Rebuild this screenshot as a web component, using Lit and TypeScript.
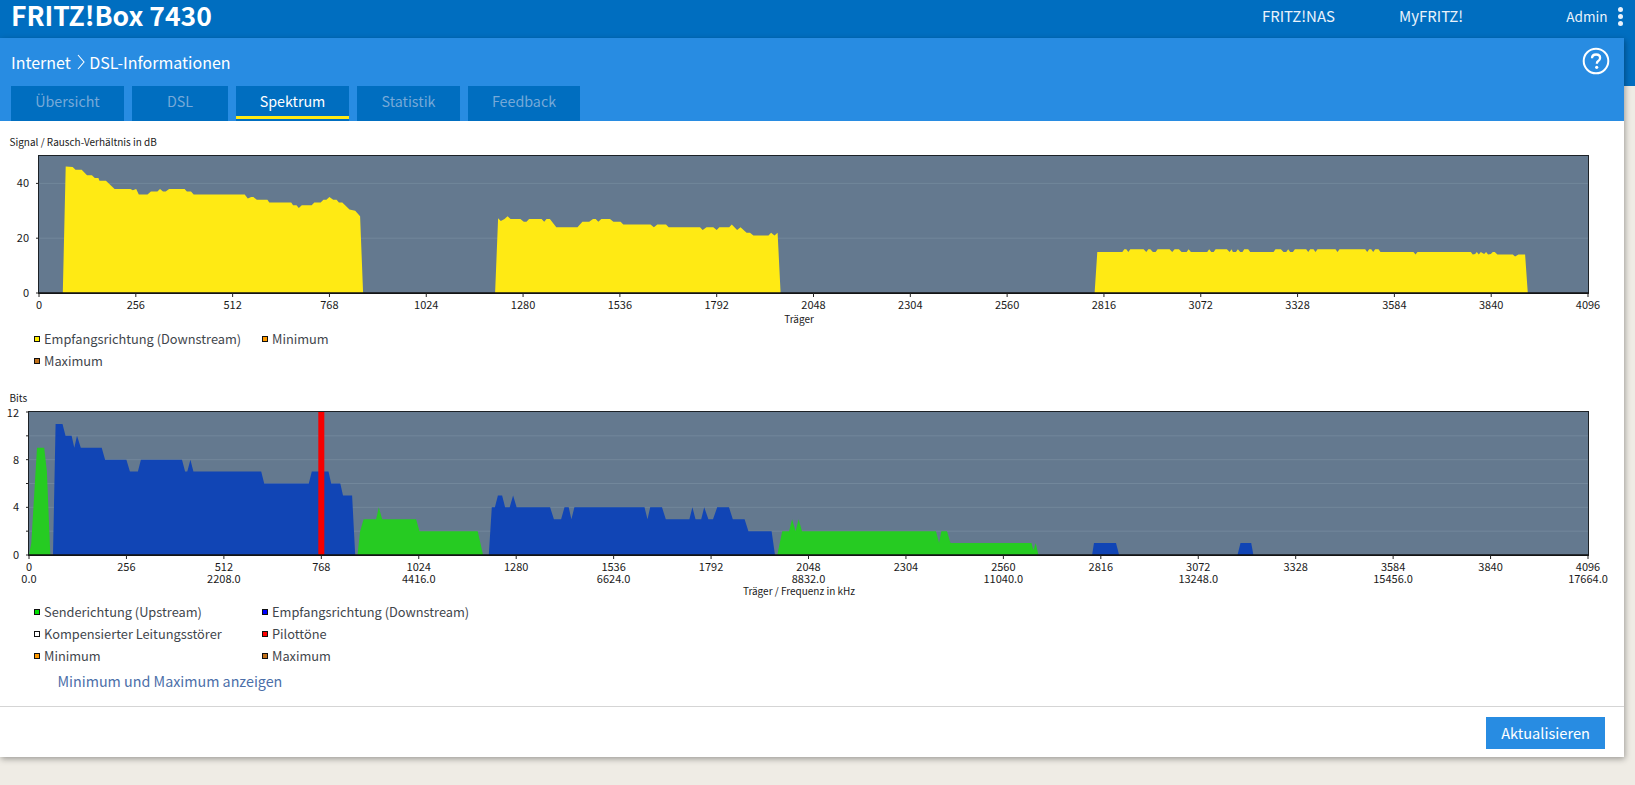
import { LitElement, html, css, svg } from "lit";
import { customElement, property } from "lit/decorators.js";

type Pt = [number, number];
interface Area { color: string; pts: Pt[] }
interface ChartCfg {
  left: number; right: number; top: number; bottom: number; height: number; maxY: number;
  yLabels: number[]; grid: number[]; minorTicks: number[];
  freq: boolean; xTitle: string; xTitleY: number; areas: Area[]; marker?: number;
}

const px3 = (p: Pt[]): Pt[] => p.map(([x, v]) => [2816 + (x - 131) / 1.135, v]);

const YELLOW = "#ffea14", BLUE = "#1145b5", GREEN = "#26cb22";

const snr1: Pt[] = [[63,0],[70.5,46.2],[89,46],[96.5,45],[113,45],[127,43],[140,43],[147.5,42],[157,42],[160,41],[177,41],[200,38],[242,38],[248,37.5],[257,38],[264,36],[287,36],[296,37],[313,37],[320,38],[328,37],[335,37],[344,38],[385,38],[391,37],[402,37],[409,36],[544,36],[552,34.5],[561,35],[567,35],[576,34],[604,34],[609,33],[667,33],[672,32],[681,32],[687,31],[695,32],[721,32],[728,33],[745,33],[752,34],[760,34],[768,35],[778,34],[787,34],[793,33],[802,33],[821,30.5],[836,30],[849,28],[857,0]];
const snr2: Pt[] = [[1206,0],[1214,27.3],[1221,26.3],[1231,27],[1239,28],[1247,27],[1273,27],[1282,26],[1289,26],[1296,27],[1329,27],[1336,26],[1342,27],[1351,27],[1368,24],[1424,24],[1437,26],[1455,26],[1465,27],[1472,27],[1479,26],[1487,27],[1510,27],[1519,26],[1538,26],[1545,25],[1617,25],[1626,24],[1635,25],[1658,25],[1665,24],[1748,24],[1755,23],[1765,24],[1783,24],[1792,23],[1799,24],[1825,24],[1832,25],[1846,23],[1855,24],[1871,22],[1880,22],[1889,21],[1929,21],[1936,22],[1945,21],[1953,22],[1961,0]];
const snr3: Pt[] = px3([[103,0],[111,15],[186,15],[192,16],[198,16],[204,15],[210,16],[250,16],[258,15],[264,16],[270,16],[278,15],[286,15],[292,16],[328,16],[336,15],[343,16],[356,16],[364,15],[379,15],[385,16],[392,15],[441,15],[447,16],[453,15],[460,15],[466,16],[500,16],[508,15],[514,16],[518,15],[527,15],[533,16],[540,15],[547,15],[552,16],[564,16],[570,15],[640,15],[646,16],[662,16],[670,15],[678,15],[684,16],[690,15],[698,15],[704,16],[738,16],[744,15],[750,16],[760,16],[766,15],[772,16],[790,16],[796,16],[826,16],[832,15],[838,16],[915,16],[921,15],[927,16],[933,16],[939,15],[945,16],[955,16],[961,15],[1060,15],[1066,14],[1072,15],[1232,15],[1238,14],[1245,14.2],[1250,15],[1256,14],[1262,15],[1272,14.2],[1278,15],[1284,14],[1292,14.2],[1298,15],[1304,15],[1312,14],[1358,14],[1365,13.3],[1375,14],[1395,14],[1403,0]]);

const chart1: ChartCfg = {
  left: 39, right: 1588, top: 7, bottom: 144, height: 179, maxY: 50,
  yLabels: [0, 20, 40], grid: [20, 40], minorTicks: [], freq: false,
  xTitle: "Träger", xTitleY: 174,
  areas: [{ color: YELLOW, pts: snr1 }, { color: YELLOW, pts: snr2 }, { color: YELLOW, pts: snr3 }],
};

const chart2: ChartCfg = {
  left: 29, right: 1588, top: 7, bottom: 150, height: 196, maxY: 12,
  yLabels: [0, 4, 8, 12], grid: [2, 4, 6, 8, 10], minorTicks: [2, 6, 10], freq: true,
  xTitle: "Träger / Frequenz in kHz", xTitleY: 190, marker: 768,
  areas: [
    { color: GREEN, pts: [[0,0],[6,1],[21,9],[40,9],[47,7],[56,0]] },
    { color: BLUE, pts: [[63,0],[70,11],[88,11],[96,10],[112,10],[119,9],[126,10],[136,9],[191,9],[200,8],[256,8],[265,7],[286,7],[294,8],[402,8],[410,7],[416,7],[424,8],[432,7],[610,7],[618,6],[735,6],[743,7],[787,7],[794,6],[818,6],[825,5],[849,5],[857,0]] },
    { color: GREEN, pts: [[863,0],[870,2],[879,3],[912,3],[919,4],[928,3],[1017,3],[1026,2],[1179,2],[1193,0]] },
    { color: BLUE, pts: [[1208,0],[1216,4],[1224,4],[1232,5],[1243,5],[1251,4],[1263,4],[1272,5],[1281,4],[1369,4],[1379,3],[1398,3],[1407,4],[1418,4],[1425,3],[1433,4],[1617,4],[1625,3],[1632,4],[1663,4],[1673,3],[1735,3],[1743,4],[1751,3],[1766,3],[1774,4],[1785,3],[1797,3],[1808,4],[1839,4],[1849,3],[1880,3],[1890,2],[1951,2],[1960,0]] },
    { color: GREEN, pts: [[1966,0],[1979,2],[1997,2],[2005,3],[2014,2],[2022,3],[2031,2],[2383,2],[2391,1],[2397,2],[2412,2],[2421,1],[2634,1],[2639,0.4],[2645,1],[2652,0]] },
    { color: BLUE, pts: [[2793,0],[2798,1],[2856,1],[2864,0]] },
    { color: BLUE, pts: [[3175,0],[3183,1],[3211,1],[3217,0]] },
  ],
};

@customElement("spectrum-chart")
class SpectrumChart extends LitElement {
  @property({ attribute: false }) cfg!: ChartCfg;
  static styles = css`
    :host { display: block; }
    svg { display: block; }
    .plot { fill: #64798f; }
    .grid { stroke: #72879b; stroke-width: 1; }
    .frame { fill: none; stroke: #1c2126; stroke-width: 1; }
    .axis { stroke: #111; stroke-width: 1.5; }
    .tick { stroke: #222; stroke-width: 1; }
    .lbl { font: 11px "Noto Sans CJK SC", "Liberation Sans", sans-serif; fill: #1a1a1a; }
    .ttl { font: 10px "Noto Sans CJK SC", "Liberation Sans", sans-serif; fill: #1a1a1a; }
    .mid { text-anchor: middle; }
    .end { text-anchor: end; }
  `;
  render() {
    const c = this.cfg;
    const X = (v: number) => c.left + (v / 4096) * (c.right - c.left);
    const Y = (v: number) => c.bottom - (v / c.maxY) * (c.bottom - c.top);
    const xs: number[] = [];
    for (let v = 0; v <= 4096; v += 256) xs.push(v);
    const bottomLabelY = c.bottom + 16;
    return html`<svg width="1624" height=${c.height} viewBox="0 0 1624 ${c.height}">
      <rect class="plot" x=${c.left} y=${c.top} width=${c.right - c.left} height=${c.bottom - c.top}></rect>
      ${c.grid.map((g) => svg`<line class="grid" x1=${c.left} x2=${c.right} y1=${Y(g)} y2=${Y(g)}></line>`)}
      ${c.areas.map((a) => svg`<polygon fill=${a.color} points=${a.pts.map(([x, v]) => `${X(x).toFixed(1)},${Y(v).toFixed(1)}`).join(" ")}></polygon>`)}
      ${c.marker !== undefined
        ? svg`<rect fill="#f60000" x=${X(c.marker) - 3} y=${c.top} width="6" height=${c.bottom - c.top}></rect>`
        : ""}
      <rect class="frame" x=${c.left - 0.5} y=${c.top - 0.5} width=${c.right - c.left + 1} height=${c.bottom - c.top + 1}></rect>
      <line class="axis" x1=${c.left - 0.5} x2=${c.right + 0.5} y1=${c.bottom} y2=${c.bottom}></line>
      ${xs.map((v) => svg`
        <line class="tick" x1=${X(v)} x2=${X(v)} y1=${c.bottom} y2=${c.bottom + 4}></line>
        <text class="lbl mid" x=${X(v)} y=${bottomLabelY}>${v}</text>
        ${c.freq && v % 512 === 0
          ? svg`<text class="lbl mid" x=${X(v)} y=${bottomLabelY + 12}>${(v * 4.3125).toFixed(1)}</text>`
          : ""}
      `)}
      ${c.yLabels.map((v) => svg`
        <line class="tick" x1=${c.left - 3} x2=${c.left} y1=${Y(v)} y2=${Y(v)}></line>
        <text class="lbl end" x=${c.left - 10} y=${Y(v) + (v === c.maxY ? 5 : 4)}>${v}</text>
      `)}
      ${c.minorTicks.map((v) => svg`<line class="tick" x1=${c.left - 3} x2=${c.left} y1=${Y(v)} y2=${Y(v)}></line>`)}
      <text class="ttl mid" x="799" y=${c.xTitleY}>${c.xTitle}</text>
    </svg>`;
  }
}

const legend1 = [
  ["Empfangsrichtung (Downstream)", "#ffee00"],
  ["Minimum", "#ff9a00"],
  ["Maximum", "#c0701a"],
];
const legend2 = [
  ["Senderichtung (Upstream)", "#00e000"],
  ["Empfangsrichtung (Downstream)", "#0000ff"],
  ["Kompensierter Leitungsstörer", "#ffffff"],
  ["Pilottöne", "#ff0000"],
  ["Minimum", "#ff9a00"],
  ["Maximum", "#c0701a"],
];

@customElement("app-root")
class AppRoot extends LitElement {
  static styles = css`
    :host {
      display: block;
      height: 785px;
      overflow: hidden;
      background: linear-gradient(#006ec0 86px, #efece5 86px);
      font-family: "Noto Sans CJK SC", "Source Sans Pro", "Liberation Sans", sans-serif;
      color: #3f464c;
    }
    .top {
      height: 38px;
      display: flex;
      align-items: center;
      padding: 0 11px;
      color: #fff;
    }
    .brand { font-size: 26.5px; font-weight: 700; line-height: 32px; flex: 1; margin-top: -8px; }
    .topnav { font-size: 15px; line-height: 20px; color: #e9f2fb; margin-top: -6px; }
    .nav1 { margin-right: 64px; }
    .nav2 { margin-right: 103px; }
    .nav3 { margin-right: 10px; font-size: 13.6px; }
    .dots { display: flex; flex-direction: column; gap: 2px; margin-top: -6px; margin-right: 1.5px; }
    .dots i { width: 5px; height: 5px; border-radius: 50%; background: #e9f2fb; }
    .panel {
      width: 1624px;
      height: 719px;
      display: flex;
      flex-direction: column;
      background: #fff;
      box-shadow: 1px 2px 6px rgba(0, 0, 0, 0.35);
    }
    .head { background: #288ce2; height: 83px; display: flex; flex-direction: column; padding: 0 11px; box-sizing: border-box; flex: none; }
    .crumbs { height: 48px; display: flex; align-items: center; color: #fff; font-size: 16px; }
    .crumbs svg.chev { margin: 0 4.5px 0 6px; }
    .help { margin-left: auto; margin-right: 3px; margin-top: -2px; }
    .tabs { display: flex; gap: 8px; height: 35px; }
    .tab {
      background: #006ec0;
      color: #76a9d8;
      font-size: 14.3px;
      line-height: 30px;
      text-align: center;
      box-sizing: border-box;
      padding-bottom: 5px;
    }
    .tab.on { color: #fff; position: relative; }
    .tab.on::after { content: ""; position: absolute; left: 0; right: 0; bottom: 2px; height: 3px; background: #ffea14; }
    .body { flex: 1; display: flex; flex-direction: column; min-height: 0; }
    .title { font-size: 10px; color: #1a1a1a; line-height: 14px; padding-left: 9.5px; }
    .t1 { margin-top: 14px; }
    .t2 { margin-top: 19px; }
    .legend {
      display: grid;
      grid-template-columns: 228px auto;
      justify-content: start;
      grid-auto-rows: 22px;
      padding-left: 34px;
      font-size: 12.8px;
      color: #3f464c;
    }
    .item { display: flex; align-items: center; gap: 4px; white-space: nowrap; line-height: 22px; }
    .sw { width: 4px; height: 4px; border: 1.5px solid #111; box-sizing: content-box; flex: none; }
    .link { color: #4c6fa9; font-size: 14.3px; line-height: 22px; padding: 3px 0 0 57.5px; }
    .foot {
      margin-top: auto;
      border-top: 1px solid #d5d5d5;
      height: 51px;
      display: flex;
      justify-content: flex-end;
      align-items: flex-start;
      padding: 10px 19px 0 0;
      box-sizing: border-box;
      flex: none;
    }
    .btn { width: 119px; height: 32px; background: #288ce2; color: #fff; font-size: 14.6px; line-height: 32px; text-align: center; }
  `;

  renderLegend(items: string[][]) {
    return html`<div class="legend">
      ${items.map(([t, c]) => html`<div class="item"><span class="sw" style="background:${c}"></span>${t}</div>`)}
    </div>`;
  }

  render() {
    const tabs = [
      ["Übersicht", 113, false],
      ["DSL", 96, false],
      ["Spektrum", 113, true],
      ["Statistik", 103, false],
      ["Feedback", 112, false],
    ] as [string, number, boolean][];
    return html`
      <div class="top">
        <div class="brand">FRITZ!Box 7430</div>
        <div class="topnav nav1">FRITZ!NAS</div>
        <div class="topnav nav2">MyFRITZ!</div>
        <div class="topnav nav3">Admin</div>
        <div class="dots"><i></i><i></i><i></i></div>
      </div>
      <div class="panel">
        <div class="head">
          <div class="crumbs">
            <span>Internet</span>
            <svg class="chev" width="8" height="16" viewBox="0 0 8 16"><path d="M1 1l6 7-6 7" fill="none" stroke="#fff" stroke-width="1.1"/></svg>
            <span>DSL-Informationen</span>
            <svg class="help" width="28" height="28" viewBox="0 0 28 28">
              <circle cx="14" cy="14" r="12.3" fill="none" stroke="#fff" stroke-width="2"/>
              <path d="M10 11.3c0-2.4 1.800-3.800 4.100-3.800 2.400 0 4 1.400 4 3.400 0 1.700-1 2.500-2.100 3.300-.8.600-1.100 1-1.100 2v.6" fill="none" stroke="#fff" stroke-width="2.300"/>
              <circle cx="14.700" cy="20.300" r="1.600" fill="#fff"/>
            </svg>
          </div>
          <div class="tabs">
            ${tabs.map(([t, w, on]) => html`<div class="tab ${on ? "on" : ""}" style="width:${w}px">${t}</div>`)}
          </div>
        </div>
        <div class="body">
          <div class="title t1">Signal / Rausch-Verhältnis in dB</div>
          <spectrum-chart .cfg=${chart1}></spectrum-chart>
          ${this.renderLegend(legend1)}
          <div class="title t2">Bits</div>
          <spectrum-chart .cfg=${chart2}></spectrum-chart>
          ${this.renderLegend(legend2)}
          <div class="link">Minimum und Maximum anzeigen</div>
          <div class="foot"><div class="btn">Aktualisieren</div></div>
        </div>
      </div>
    `;
  }
}
